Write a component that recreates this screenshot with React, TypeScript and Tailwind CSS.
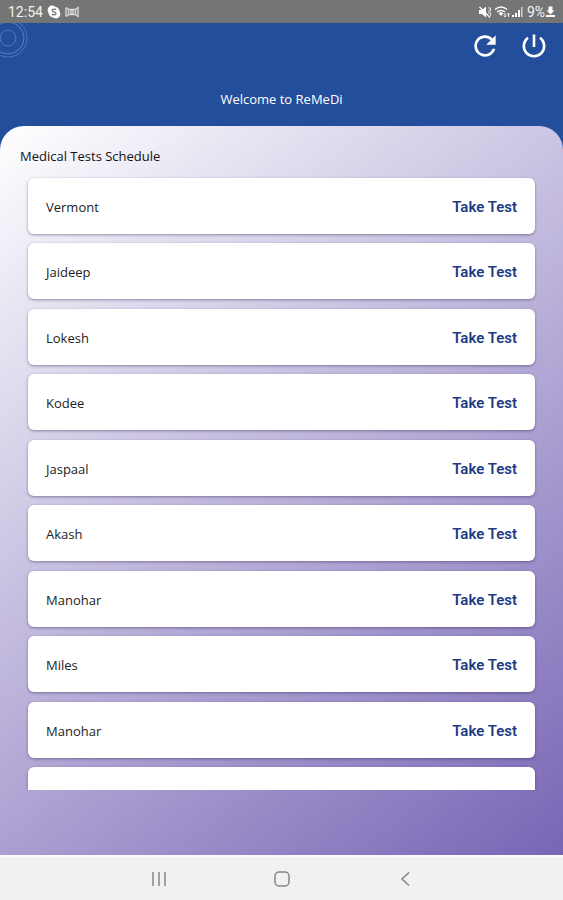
import React from "react";

const patients = [
  "Vermont",
  "Jaideep",
  "Lokesh",
  "Kodee",
  "Jaspaal",
  "Akash",
  "Manohar",
  "Miles",
  "Manohar",
  "",
];

function StatusBar() {
  return (
    <div className="flex h-[23px] shrink-0 items-center justify-between bg-[#757575] pl-2 pr-2 font-['Roboto',sans-serif] text-sm text-[#f2f2f2]">
      <div className="flex items-center gap-1">
        <span>12:54</span>
        <svg viewBox="0 0 14 14" className="h-[14px] w-[14px]" aria-hidden="true">
          <circle cx="5" cy="5" r="4.4" fill="#fff" />
          <circle cx="9" cy="9" r="4.4" fill="#fff" />
          <circle cx="7" cy="7" r="5.6" fill="#fff" />
          <path d="M9 5C8.4 3.6 5.2 3.7 5.2 5.4C5.2 7.1 9 6.6 9 8.5C9 10.4 5.5 10.3 5 8.8" fill="none" stroke="#757575" strokeWidth="1.3" />
        </svg>
        <svg viewBox="0 0 14 12" className="h-3 w-[14px]" fill="none" stroke="#d6d6d6" strokeWidth="1.4" aria-hidden="true">
          <path d="M1 1.500V10.500M1 1.500L4 3.500H10L13 1.500V10.500L10 8.500H4L1 10.500M3.500 3.500V8.500M10.500 3.500V8.500" />
          <circle cx="7" cy="6" r="1.500" />
        </svg>
      </div>
      <div className="flex items-center">
        <svg viewBox="0 0 14 14" className="h-[14px] w-[14px]" aria-hidden="true">
          <path d="M1 5H4L8 1.500V12.500L4 9H1Z" fill="#fff" />
          <path d="M1.500 2L12 12.500" stroke="#fff" strokeWidth="1.3" />
          <path d="M10 3H12.500V6H10M10 8H12.500V11" fill="none" stroke="#ddd" strokeWidth="1.1" />
        </svg>
        <svg viewBox="0 0 17 14" className="ml-[2px] h-[14px] w-[17px]" aria-hidden="true">
          <path d="M1 4.500Q7 -0.500 13 4.500M3 7Q7 4 11 7" fill="none" stroke="#fff" strokeWidth="1.5" />
          <path d="M4.500 8Q7 6.500 9.500 8L7 11Z" fill="#fff" />
          <path d="M11 8V12M9.800 10.500L11 12L12.200 10.500M14.500 12V8M13.300 9.500L14.500 8L15.700 9.500" fill="none" stroke="#eee" />
        </svg>
        <svg viewBox="0 0 12 12" className="h-3 w-3" aria-hidden="true">
          <path d="M1 9H3V11H1ZM4 7H6V11H4ZM7 4H9V11H7Z" fill="#fff" />
          <path d="M10 1H11.500V11H10Z" fill="#d0d0d0" />
        </svg>
        <span className="ml-1">9%</span>
        <svg viewBox="0 0 9 12" className="ml-px h-3 w-[9px]" aria-hidden="true">
          <path d="M2.500 0.500H6.500V4.500H8.500L4.500 8.500L0.500 4.500H2.500ZM0 9H9V11H0Z" fill="#fff" />
        </svg>
      </div>
    </div>
  );
}

function Header() {
  return (
    <header className="relative h-[103px] shrink-0 overflow-hidden text-white">
      <svg viewBox="0 0 30 36" className="absolute left-0 top-0 h-9 w-[30px]" fill="none" stroke="#6f96d4" aria-hidden="true">
        <circle cx="8" cy="15" r="8" strokeOpacity=".6" />
        <circle cx="8" cy="15" r="16" strokeOpacity=".7" />
        <circle cx="8" cy="15" r="19" strokeOpacity=".55" />
      </svg>
      <div className="flex h-[46px] items-center justify-end gap-5 pr-4">
        <button type="button" aria-label="Refresh">
          <svg viewBox="0 0 24 24" className="h-8 w-8" fill="#fff" aria-hidden="true">
            <path d="M17.65 6.35C16.2 4.9 14.21 4 12 4c-4.42 0-7.99 3.58-7.99 8s3.57 8 7.99 8c3.73 0 6.84-2.55 7.73-6h-2.08c-.82 2.33-3.04 4-5.65 4-3.31 0-6-2.69-6-6s2.69-6 6-6c1.66 0 3.14.69 4.22 1.78L13 11h7V4l-2.35 2.35z" />
          </svg>
        </button>
        <button type="button" aria-label="Log out">
          <svg viewBox="0 0 26 26" className="h-[26px] w-[26px]" fill="none" stroke="#fff" strokeWidth="2.600" aria-hidden="true">
            <path d="M13 1.500V14M7 4.800A10.200 10.200 0 1 0 19 4.800" />
          </svg>
        </button>
      </div>
      <h1 className="mt-5 text-center text-[13px] leading-5">Welcome to ReMeDi</h1>
    </header>
  );
}

function TestRow({ name }: { name: string }) {
  return (
    <li className="flex h-14 shrink-0 items-center justify-between rounded-md bg-white px-[18px] pt-0.5 shadow-[0_1px_3px_rgba(40,30,70,0.45)]">
      <span className="text-[13px] leading-5 text-[#222]">{name}</span>
      {name && (
        <button type="button" className="font-['Roboto',sans-serif] text-[15px] font-semibold leading-5 text-[#1d3a85]">
          Take Test
        </button>
      )}
    </li>
  );
}

export default function App() {
  return (
    <div className="flex h-screen flex-col bg-[#234e9b] font-['Open_Sans','Noto_Sans',sans-serif]">
      <StatusBar />
      <Header />
      <main className="flex min-h-0 flex-1 flex-col rounded-t-3xl bg-linear-[142deg] from-white to-[#7865b5] pb-[65px] pt-5">
        <h2 className="px-5 text-[13px] font-medium leading-5 text-[#111]">Medical Tests Schedule</h2>
        <div className="mt-2 min-h-0 flex-1 overflow-y-auto px-7 pt-1 [scrollbar-width:none]">
          <ul className="flex h-[645px] flex-col justify-between">
            {patients.map((name, i) => (
              <TestRow key={i} name={name} />
            ))}
          </ul>
        </div>
      </main>
      <nav className="flex h-[45px] shrink-0 items-center justify-center gap-[99px] border-t-2 border-[#fafafa] bg-[#f1f1f1] pt-px text-[#858585]">
        <button type="button" aria-label="Recent apps">
          <svg viewBox="0 0 24 24" className="h-6 w-6" stroke="currentColor" strokeWidth="1.500" aria-hidden="true">
            <path d="M6 5V19M12 5V19M18 5V19" />
          </svg>
        </button>
        <button type="button" aria-label="Home">
          <svg viewBox="0 0 24 24" className="h-6 w-6" fill="none" stroke="currentColor" strokeWidth="1.500" aria-hidden="true">
            <rect x="5" y="5" width="14" height="14" rx="4" />
          </svg>
        </button>
        <button type="button" aria-label="Back">
          <svg viewBox="0 0 24 24" className="h-6 w-6" fill="none" stroke="currentColor" strokeWidth="1.500" aria-hidden="true">
            <path d="M16 5.500L9 12L16 18.500" />
          </svg>
        </button>
      </nav>
    </div>
  );
}
